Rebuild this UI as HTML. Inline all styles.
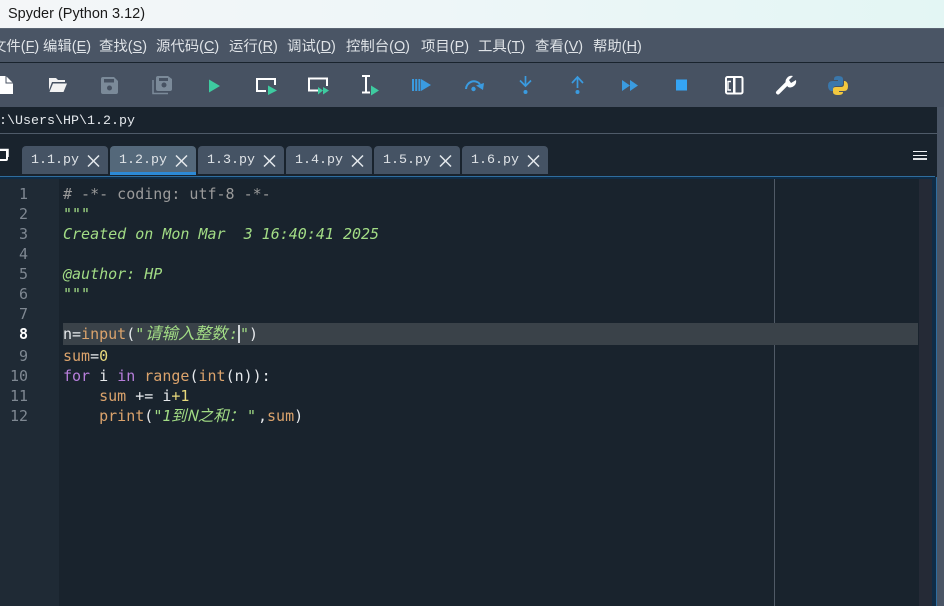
<!DOCTYPE html>
<html><head><meta charset="utf-8"><style>
html,body{margin:0;padding:0;width:944px;height:606px;overflow:hidden;background:#19232d}
div,span,svg{position:absolute;display:block}
u,b,i,em{position:static}
#title{left:0;top:0;width:944px;height:28px;background:linear-gradient(90deg,#f4f6f8 0,#eef6f8 45%,#e3f6f4 100%);font:14.5px/28px "Liberation Sans",sans-serif;color:#1a1a1a;}
#title span{left:8px;top:0;white-space:nowrap}
#menu{left:0;top:28px;width:944px;background:#4a5565;border-bottom:1px solid #19232d;border-top:1px solid #5a6472;box-sizing:content-box;height:33px}
.m{top:8px;font:14.4px/20px "Liberation Sans","Noto Sans CJK SC",sans-serif;color:#dfe3e7;white-space:nowrap}
.m u{text-decoration:underline;text-underline-offset:1px;text-decoration-thickness:1px}
#tool{left:0;top:63px;width:944px;height:44px;background:#475262}
#path{left:0;top:107px;width:937px;height:26px;background:#19232d;border-bottom:1px solid #4f5b69;font:13.33px/29px "Liberation Mono","Noto Sans CJK SC",monospace;color:#e4e8ec;}
#path span{left:-1px;top:0;white-space:pre}
#side{left:937px;top:107px;width:7px;height:499px;background:#4a5565}
.tab{top:146px;width:86px;height:28px;background:#455364;border-radius:4px 4px 0 0;color:#dfe3e7;font:13.33px/30px "Liberation Mono",monospace}
.tab span{left:9px;top:0;white-space:pre}
.tab svg{left:65px;top:9px}
.tab.a{background:#54687a;height:26px;border-bottom:3px solid #2d8ad6}
#line{left:0;top:176px;width:935px;background:#0f2c46;border-top:1px solid #2f6d9e;box-sizing:border-box;height:3px}
#edge{left:932px;top:177px;width:5px;height:429px;background:#0f2c46;border-right:1px solid #2f6d9e;box-sizing:border-box}
#gut{left:0;top:179px;width:59px;height:427px;background:#1f2a35}
#strip{left:919px;top:179px;width:13px;height:427px;background:#252a36}
#vl{left:774px;top:179px;width:1px;height:427px;background:#505a66}
#hl{left:63px;top:323px;width:855px;height:22px;background:#3a4249}
.n{left:0;width:28px;text-align:right;font:15px/20px "DejaVu Sans Mono",monospace;color:#7f8892;white-space:pre}
.c{left:63px;font:15px/20px "DejaVu Sans Mono","Noto Sans CJK SC",monospace;color:#e6e9ec;white-space:pre}
.cm{color:#9a9a9a}.st{color:#a2dc85;font-style:italic}.bi{color:#dba36c;font-style:normal}.kw{color:#b77edb;font-style:normal}.nu{color:#e8d97c;font-style:normal}
.cj{font-family:"Noto Sans CJK SC",sans-serif;font-style:italic;color:#a2dc85;white-space:pre}
</style></head><body>
<div id="title"><span>Spyder (Python 3.12)</span></div>
<div id="menu">
<span class="m" style="left:-8px">文件(<u>F</u>)</span>
<span class="m" style="left:43px">编辑(<u>E</u>)</span>
<span class="m" style="left:99px">查找(<u>S</u>)</span>
<span class="m" style="left:156px">源代码(<u>C</u>)</span>
<span class="m" style="left:229px">运行(<u>R</u>)</span>
<span class="m" style="left:287px">调试(<u>D</u>)</span>
<span class="m" style="left:346px">控制台(<u>O</u>)</span>
<span class="m" style="left:421px">项目(<u>P</u>)</span>
<span class="m" style="left:478px">工具(<u>T</u>)</span>
<span class="m" style="left:535px">查看(<u>V</u>)</span>
<span class="m" style="left:593px">帮助(<u>H</u>)</span>
</div>
<div id="tool"></div>
<svg style="left:0;top:63px" width="944" height="44" viewBox="0 63 944 44">
<path d="M-4 76H6L13 83V94H-4Z" fill="#fff"/><path d="M6 76V83H13" fill="none" stroke="#475262" stroke-width="1"/>
<path d="M49 78H56L58 80H65V82H52L49 90Z" fill="#f2f2f2"/><path d="M53 83.500H67L63.500 92H49.500Z" fill="#f2f2f2"/>
<path d="M101 79Q101 77 103 77H114L118 81V92Q118 94 116 94H103Q101 94 101 92Z" fill="#7b8a99"/><rect x="104" y="79" width="10" height="3.500" fill="#475262"/><circle cx="109.500" cy="88" r="2.500" fill="#475262"/>
<path d="M156 78Q156 76 158 76H168L172 79V89Q172 91 170 91H158Q156 91 156 89Z" fill="#7b8a99"/><rect x="159" y="78" width="9" height="3" fill="#475262"/><circle cx="164" cy="85" r="2.500" fill="#475262"/><path d="M153 80V93.500H168" fill="none" stroke="#7b8a99" stroke-width="1.500"/>
<path d="M209 79.500L220 86L209 92.500Z" fill="#3ecba0"/>
<path d="M266 91H257V79H275V85" fill="none" stroke="#fff" stroke-width="2"/><path d="M268 85.500L277 90.500L268 95Z" fill="#3ecba0"/>
<path d="M318 90.500H309V78.500H327V86" fill="none" stroke="#fff" stroke-width="2"/><path d="M318 87L323 90.500L318 94.500ZM323 87L329 90.500L323 94.500Z" fill="#3ecba0"/>
<path d="M362 76H370M366 76V92M362 92.500H370" fill="none" stroke="#fff" stroke-width="2"/><path d="M371 85.500L379 90.500L371 95.500Z" fill="#3ecba0"/>
<path d="M412 79H414V91H412ZM415.200 79H417.200V91H415.200ZM418.400 79H420.400V91H418.400ZM421 79L431 85L421 91Z" fill="#3a9be0"/>
<path d="M466 89A8 8 0 0 1 480 84" fill="none" stroke="#3a9be0" stroke-width="2"/><path d="M476 85.500L484 83L483 90Z" fill="#3a9be0"/><circle cx="473.500" cy="89" r="2.200" fill="#3a9be0"/>
<path d="M525.500 76V86M520 80.500L525.500 86L531 80.500" fill="none" stroke="#3a9be0" stroke-width="1.700"/><circle cx="525.500" cy="92" r="2" fill="#3a9be0"/>
<path d="M577.500 88V77M572 83L577.500 77L583 83" fill="none" stroke="#3a9be0" stroke-width="1.700"/><circle cx="577.500" cy="92" r="2" fill="#3a9be0"/>
<path d="M622 80L630 85.500L622 91ZM630 80L638 85.500L630 91Z" fill="#3a9be0"/>
<rect x="676" y="79.500" width="11" height="11" fill="#35a5f5"/>
<rect x="726" y="77" width="16.500" height="16.500" rx="1.500" fill="none" stroke="#fff" stroke-width="2"/><rect x="733" y="77" width="2.500" height="17" fill="#fff"/><path d="M731 81.500H728V90H731" fill="none" stroke="#fff" stroke-width="1.400"/>
<path d="M778 92.500L788 82.500" stroke="#fff" stroke-width="4" stroke-linecap="round"/><path d="M786 84A6 6 0 0 1 793 76L789 80L791 83L796 80A6 6 0 0 1 788 87Z" fill="#fff"/>
<path d="M838 76Q843 76 843 79V84Q843 86 840 86H836Q833 86 833 89V91H831Q828 90 828 85.500Q828 81 833 81H838V80H834V79Q834 76 838 76Z" fill="#3a77ab"/>
<path d="M838 95Q833 95 833 92V89Q833 87 836 87H841Q844 87 844 84V81H845Q848 82 848 86.500Q848 91 844 91H839V92H843V92.500Q843 95 838 95Z" fill="#f2c83f"/>
</svg>
<div id="path"><span>:\Users\HP\1.2.py</span></div>
<div id="side"></div>
<svg style="left:0;top:148px" width="12" height="16"><rect x="-3" y="2" width="10" height="10" rx="1" fill="none" stroke="#fff" stroke-width="2"/><path d="M-1 1.500H8V9" fill="none" stroke="#fff" stroke-width="1.500"/></svg>
<div class="tab" style="left:22px"><span>1.1.py</span><svg width="14" height="14"><path d="M1 .5L12 11.500M12 .5L1 11.500" stroke="#e4e8ec" stroke-width="1.500"/></svg></div>
<div class="tab a" style="left:110px"><span>1.2.py</span><svg width="14" height="14"><path d="M1 .5L12 11.500M12 .5L1 11.500" stroke="#e4e8ec" stroke-width="1.500"/></svg></div>
<div class="tab" style="left:198px"><span>1.3.py</span><svg width="14" height="14"><path d="M1 .5L12 11.500M12 .5L1 11.500" stroke="#e4e8ec" stroke-width="1.500"/></svg></div>
<div class="tab" style="left:286px"><span>1.4.py</span><svg width="14" height="14"><path d="M1 .5L12 11.500M12 .5L1 11.500" stroke="#e4e8ec" stroke-width="1.500"/></svg></div>
<div class="tab" style="left:374px"><span>1.5.py</span><svg width="14" height="14"><path d="M1 .5L12 11.500M12 .5L1 11.500" stroke="#e4e8ec" stroke-width="1.500"/></svg></div>
<div class="tab" style="left:462px"><span>1.6.py</span><svg width="14" height="14"><path d="M1 .5L12 11.500M12 .5L1 11.500" stroke="#e4e8ec" stroke-width="1.500"/></svg></div>
<svg style="left:913px;top:150px" width="14" height="11"><path d="M0 1.500H14M0 5.500H14" stroke="#f0f2f4" stroke-width="1"/><path d="M0 9H14" stroke="#e0e2e4" stroke-width="2"/></svg>
<div id="line"></div><div id="edge"></div>
<div id="gut"></div><div id="strip"></div><div id="vl"></div><div id="hl"></div>
<span class="n" style="top:184px">1</span>
<span class="n" style="top:204px">2</span>
<span class="n" style="top:224px">3</span>
<span class="n" style="top:244px">4</span>
<span class="n" style="top:264px">5</span>
<span class="n" style="top:284px">6</span>
<span class="n" style="top:304px">7</span>
<span class="n" style="top:324px;color:#fff;font-weight:bold">8</span>
<span class="n" style="top:346px">9</span>
<span class="n" style="top:366px">10</span>
<span class="n" style="top:386px">11</span>
<span class="n" style="top:406px">12</span>
<span class="c cm" style="top:184px"># -*- coding: utf-8 -*-</span>
<span class="c st" style="top:204px">"""</span>
<span class="c st" style="top:224px">Created on Mon Mar  3 16:40:41 2025</span>
<span class="c st" style="top:264px">@author: HP</span>
<span class="c st" style="top:284px">"""</span>
<span class="c" style="top:324px">n=<em class="bi">input</em>(<em class="st">"</em></span>
<span class="cj" style="left:145px;top:320px;font-size:16.5px;line-height:24px">请输入整数</span>
<span class="c st" style="top:324px;left:229px">:</span>
<span class="c st" style="top:324px;left:240px">"</span>
<span class="c" style="top:324px;left:249px">)</span>
<span style="left:238px;top:325px;width:1.500px;height:18px;background:#d0d4d8"></span>
<span class="c" style="top:346px"><em class="bi">sum</em>=<em class="nu">0</em></span>
<span class="c" style="top:366px"><em class="kw">for</em> i <em class="kw">in</em> <em class="bi">range</em>(<em class="bi">int</em>(n)):</span>
<span class="c" style="top:386px">    <em class="bi">sum</em> += i<em class="nu">+1</em></span>
<span class="c" style="top:406px">    <em class="bi">print</em>(<em class="st">"1</em></span>
<span class="cj" style="left:171px;top:404px;font-size:15.500px;line-height:22px">到N之和：</span>
<span class="c st" style="top:406px;left:247px">"</span>
<span class="c" style="top:406px;left:258px">,<em class="bi">sum</em>)</span>
</body></html>
